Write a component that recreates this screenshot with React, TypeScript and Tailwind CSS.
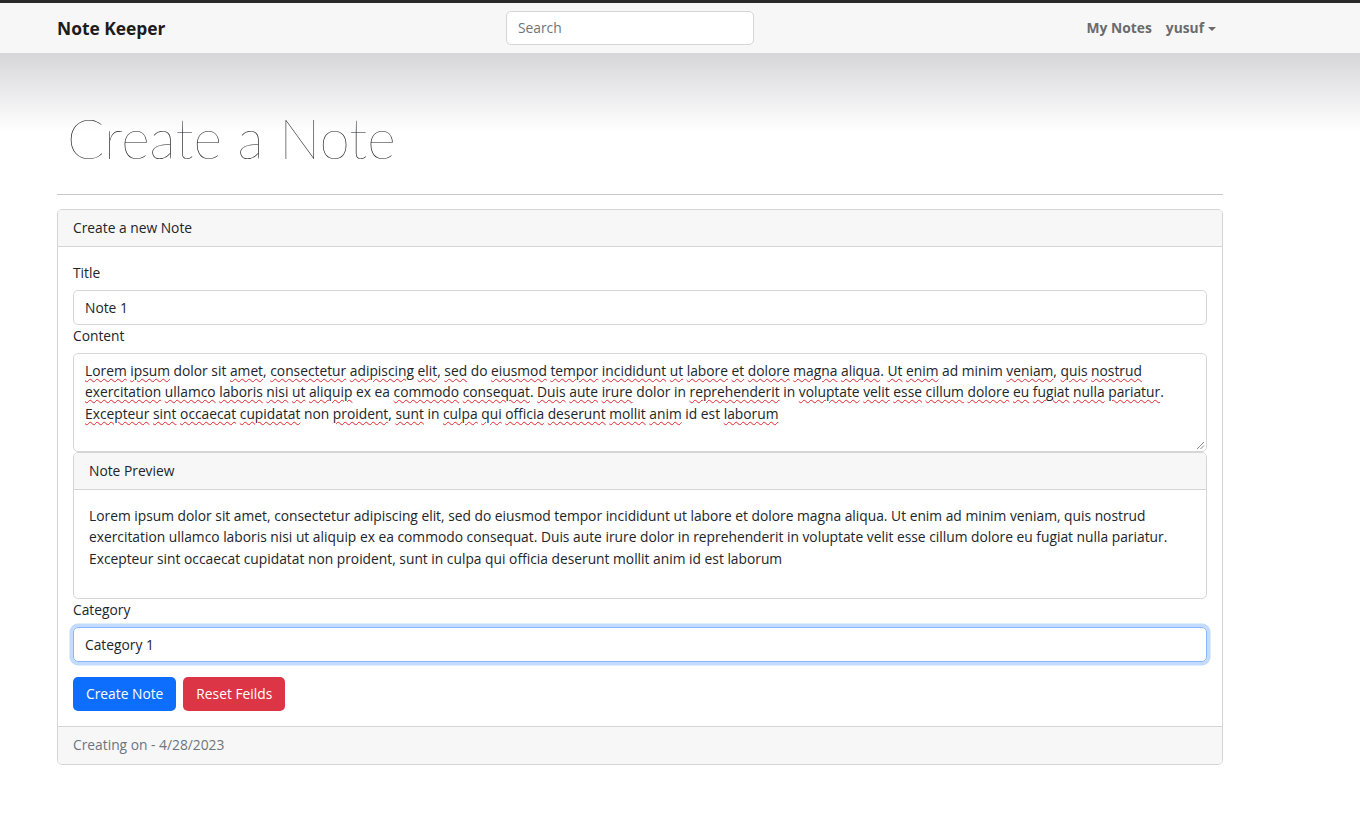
import React from "react";

const lines = [
  "Lorem ipsum dolor sit amet, consectetur adipiscing elit, sed do eiusmod tempor incididunt ut labore et dolore magna aliqua. Ut enim ad minim veniam, quis nostrud",
  "exercitation ullamco laboris nisi ut aliquip ex ea commodo consequat. Duis aute irure dolor in reprehenderit in voluptate velit esse cillum dolore eu fugiat nulla pariatur.",
  "Excepteur sint occaecat cupidatat non proident, sunt in culpa qui officia deserunt mollit anim id est laborum",
];

// words the spell checker accepts
const known = new Set(["dolor", "sit", "do", "ad", "minim", "ex", "ea", "in", "non", "id", "est"]);

function SpellLine({ text }: { text: string }) {
  const tokens = text.split(" ");
  return (
    <div className="whitespace-nowrap">
      {tokens.map((tok, i) => {
        const m = tok.match(/^([A-Za-z]+)(.*)$/);
        const word = m ? m[1] : tok;
        const rest = m ? m[2] : "";
        return (
          <React.Fragment key={i}>
            {known.has(word) ? (
              word
            ) : (
              <span className="underline decoration-wavy decoration-[#e0262b] decoration-1 underline-offset-[2px]">
                {word}
              </span>
            )}
            {rest}
            {i < tokens.length - 1 ? " " : ""}
          </React.Fragment>
        );
      })}
    </div>
  );
}

export default function App() {
  return (
    <div className="min-h-[832px] bg-white font-['Open_Sans',sans-serif] text-[13.8px] leading-[21.6px] text-[#212529]">
      {/* Navbar */}
      <div className="border-t-[3px] border-[#2a2a2a] bg-[#f7f7f8]">
        <div className="ml-[57px] flex h-[50px] w-[1166px] items-center">
          <div className="w-[449px] text-[17.4px] font-bold leading-[27px] text-[#1c1c1c]">Note Keeper</div>
          <div className="flex h-[34px] w-[248px] items-center rounded-[5px] border border-[#d4d6da] bg-white px-[11px] text-[#6c757d]">
            Search
          </div>
          <div className="ml-auto flex items-center font-bold text-[#6b6b6b]">
            <span className="px-[7px]">My Notes</span>
            <span className="flex items-center px-[7px]">
              yusuf
              <span className="ml-[4px] mt-[1px] h-0 w-0 border-x-[4.5px] border-t-[4.5px] border-x-transparent border-t-[#6b6b6b]" />
            </span>
          </div>
        </div>
      </div>

      {/* Main */}
      <div className="bg-[linear-gradient(to_bottom,#d6d6d9,#ffffff_78px)] pt-[54px]">
        <div className="ml-[57px] w-[1166px]">
          <h1 className="px-[10px] font-['Lato',sans-serif] text-[55px] font-thin leading-[62px] text-[#111418]">
            Create a Note
          </h1>
          <div className="mt-[25px] h-px bg-[#c8c8c8]" />

          {/* Card */}
          <div className="mt-[14px] overflow-hidden rounded-[5px] border border-[#d5d5d5]">
            <div className="border-b border-[#d5d5d5] bg-[#f7f7f7] px-[15px] py-[7px]">Create a new Note</div>
            <div className="p-[15px]">
              <div className="mb-[7px]">Title</div>
              <div className="rounded-[5px] border border-[#d4d6da] px-[11px] py-[5.4px]">Note 1</div>
              <div className="mb-[7px]">Content</div>
              <div className="relative h-[99px] rounded-[5px] border border-[#d4d6da] px-[11px] py-[5.4px]">
                {lines.map((l, i) => (
                  <SpellLine key={i} text={l} />
                ))}
                <svg className="absolute bottom-[1px] right-[1px]" width="9" height="9" viewBox="0 0 9 9">
                  <path d="M8 1 L1 8 M8 4.5 L4.5 8" stroke="#888" strokeWidth="1" />
                </svg>
              </div>

              {/* Preview */}
              <div className="overflow-hidden rounded-[5px] border border-[#d5d5d5]">
                <div className="border-b border-[#d5d5d5] bg-[#f7f7f7] px-[15px] py-[7px]">Note Preview</div>
                <div className="p-[15px] pb-[28px]">
                  {lines.map((l, i) => (
                    <div key={i} className="whitespace-nowrap">
                      {l}
                    </div>
                  ))}
                </div>
              </div>

              <div className="mb-[7px]">Category</div>
              <div className="rounded-[5px] border border-[#86b7fe] px-[11px] py-[5.4px] shadow-[0_0_0_3.5px_rgba(13,110,253,0.25)]">
                Category 1
              </div>

              <div className="mt-[15px] flex gap-[7px]">
                <button className="h-[34px] rounded-[5px] bg-[#0d6efd] px-[13px] text-white">Create Note</button>
                <button className="h-[34px] rounded-[5px] bg-[#dc3545] px-[13px] text-white">Reset Feilds</button>
              </div>
            </div>
            <div className="border-t border-[#d5d5d5] bg-[#f7f7f7] px-[15px] pb-[8px] pt-[7.5px] text-[#6c757d]">
              Creating on - 4/28/2023
            </div>
          </div>
        </div>
      </div>
    </div>
  );
}
